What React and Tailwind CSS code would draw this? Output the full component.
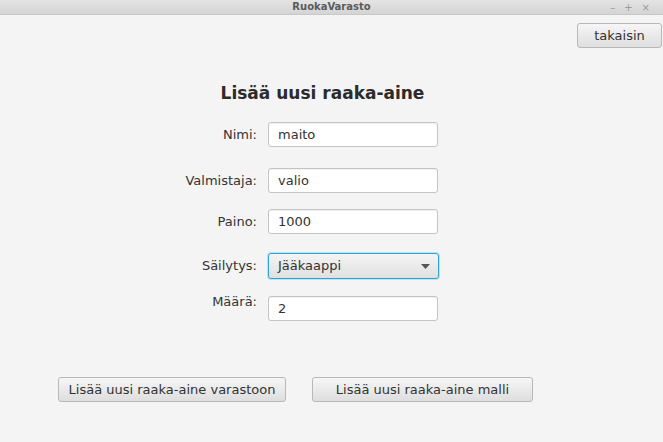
import React from "react";

function Field({ label, value, top = false }) {
  return (
    <div className={`flex ${top ? "items-start" : "items-center"}`}>
      <div className={`w-[258px] text-right pr-[1px] ${top ? "-mt-[4px]" : ""}`}>{label}</div>
      <div className="ml-[10px] w-[170px] h-[25px] bg-white border border-[#c4c4c4] rounded-[3px] flex items-center pl-[9px] shadow-[inset_0_1px_1px_rgba(0,0,0,0.06)]">
        {value}
      </div>
    </div>
  );
}

function Button({ children, className = "" }) {
  return (
    <div
      className={`h-[25px] border border-[#b8b8b8] rounded-[3px] bg-gradient-to-b from-[#f6f6f6] to-[#dedede] flex items-center justify-center ${className}`}
    >
      {children}
    </div>
  );
}

export default function App() {
  return (
    <div className="w-[663px] h-[442px] bg-[#f4f4f4] flex flex-col text-[13px] text-[#333] font-['DejaVu_Sans',sans-serif]">
      <div className="h-[15px] relative flex items-center justify-center bg-gradient-to-b from-[#e4e4e4] to-[#d4d4d4] border-b border-[#c8c8c8]">
        <span className="text-[10px] font-bold text-[#5a5a5a] leading-none">RuokaVarasto</span>
        <div className="absolute right-[13px] top-0 h-[15px] flex items-center gap-[9px] text-[10px] text-[#9a9a9a] leading-none">
          <span>–</span>
          <span>+</span>
          <span>×</span>
        </div>
      </div>

      <div className="flex justify-end pt-[8px] pr-[1px]">
        <Button className="w-[85px]">takaisin</Button>
      </div>

      <h1 className="mt-[35px] text-center text-[17px] font-bold leading-[20px] text-[#2b2b2b] pr-[18px]">
        Lisää uusi raaka-aine
      </h1>

      <div className="mt-[19px] flex flex-col">
        <Field label="Nimi:" value="maito" />
        <div className="mt-[21px]">
          <Field label="Valmistaja:" value="valio" />
        </div>
        <div className="mt-[16px]">
          <Field label="Paino:" value="1000" />
        </div>
        <div className="mt-[19px] flex items-center">
          <div className="w-[258px] text-right pr-[1px]">Säilytys:</div>
          <div className="ml-[10px] w-[171px] h-[26px] border border-[#2aa3d8] rounded-[3px] bg-gradient-to-b from-[#f4f4f4] to-[#e0e0e0] flex items-center justify-between pl-[9px] pr-[8px] shadow-[0_0_0_1px_rgba(42,163,216,0.25)]">
            <span>Jääkaappi</span>
            <svg width="9" height="5" viewBox="0 0 9 5">
              <path d="M0 0 L9 0 L4.5 5 Z" fill="#555" />
            </svg>
          </div>
        </div>
        <div className="mt-[17px]">
          <Field label="Määrä:" value="2" top />
        </div>
      </div>

      <div className="mt-[56px] flex pl-[58px] gap-[26px]">
        <Button className="w-[228px]">Lisää uusi raaka-aine varastoon</Button>
        <Button className="w-[221px]">Lisää uusi raaka-aine malli</Button>
      </div>
    </div>
  );
}
